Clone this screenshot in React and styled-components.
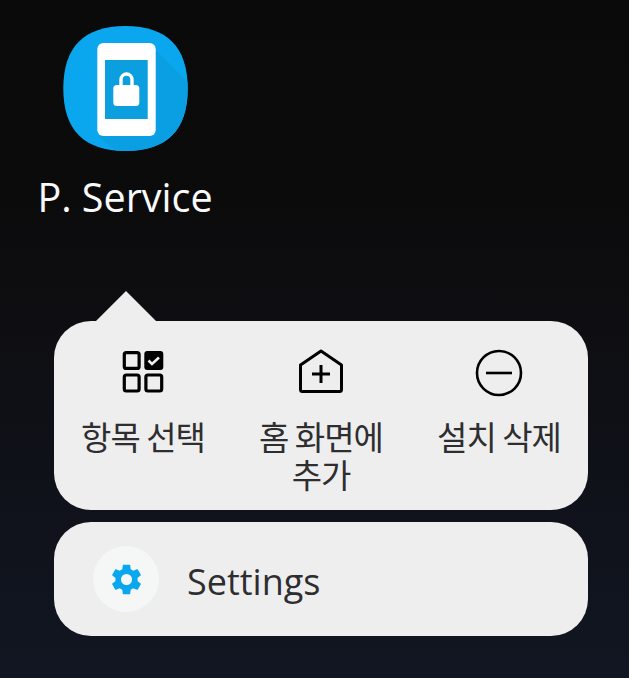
import React from "react";
import styled, { createGlobalStyle } from "styled-components";

const Global = createGlobalStyle`
  html, body {
    margin: 0;
    padding: 0;
    background: #0c0c10;
  }
`;

const Screen = styled.div`
  width: 629px;
  height: 678px;
  overflow: hidden;
  box-sizing: border-box;
  padding: 26px 41px 0 54px;
  background: linear-gradient(180deg, #0b0a0a 0%, #0c0b0c 30%, #0f1016 60%, #111622 100%);
  font-family: "Noto Sans", "Noto Sans CJK KR", sans-serif;
`;

const AppTile = styled.div`
  width: 142px;
  display: flex;
  flex-direction: column;
  align-items: center;
`;

const Label = styled.div`
  margin-top: 18px;
  color: #fafafa;
  font-size: 39.5px;
  line-height: 54px;
  white-space: nowrap;
  font-family: "Open Sans", sans-serif;
`;

const Popup = styled.div`
  position: relative;
  margin-top: 97px;
  height: 189px;
  background: #eeeeef;
  border-radius: 37px;
  display: grid;
  grid-template-columns: repeat(3, 1fr);
`;

const Arrow = styled.div`
  position: absolute;
  left: 42px;
  top: -30px;
  width: 60px;
  height: 30px;
  background: #eeeeef;
  clip-path: polygon(50% 0, 100% 100%, 0 100%);
`;

const Action = styled.div`
  display: flex;
  flex-direction: column;
  align-items: center;
  padding-top: 29px;
`;

const ActionIcon = styled.svg`
  width: 46px;
  height: 46px;
  display: block;
  overflow: visible;
`;

const ActionText = styled.div`
  margin-top: 21px;
  width: 150px;
  text-align: center;
  color: #2e2e30;
  font-family: "Noto Sans CJK KR", sans-serif;
  font-size: 33px;
  line-height: 38px;
  letter-spacing: -1px;
  word-break: keep-all;
`;

const SettingsCard = styled.div`
  margin-top: 12px;
  height: 114px;
  background: #eeeeef;
  border-radius: 37px;
  display: flex;
  align-items: center;
  padding-left: 39px;
  gap: 28px;
`;

const GearCircle = styled.div`
  width: 66px;
  height: 66px;
  border-radius: 50%;
  background: #f5f6f6;
  display: flex;
  align-items: center;
  justify-content: center;
`;

const SettingsText = styled.div`
  padding-top: 4px;
  color: #2e2e30;
  font-family: "Open Sans", sans-serif;
  font-size: 36px;
`;

function AppIcon() {
  return (
    <svg width="126" height="126" viewBox="0 0 126 126">
      <defs>
        <clipPath id="squircle">
          <path d="M63.500 0C105 0 125.700 21 125.700 62.500C125.700 104 105 125 63.500 125C22 125 1.300 104 1.300 62.500C1.300 21 22 0 63.500 0Z" />
        </clipPath>
      </defs>
      <g clipPath="url(#squircle)">
        <rect width="126" height="126" fill="#0ba7ee" />
        <path d="M93.700 24L130 60V130H60L36 110H93.700Z" fill="#0a9fe2" />
        <rect x="35.300" y="17" width="58.400" height="93" rx="6" fill="#fff" />
        <rect x="43" y="34" width="42.700" height="59" fill="#0b9fe0" />
        <path d="M59 62V53.500a5.500 5.500 0 0 1 11 0V62" fill="none" stroke="#fff" strokeWidth="3.400" />
        <rect x="51.300" y="59" width="26" height="21" rx="3.500" fill="#fff" />
      </g>
    </svg>
  );
}

function GridIcon() {
  return (
    <ActionIcon viewBox="0 0 46 46">
      <g fill="none" stroke="#000" strokeWidth="3.200">
        <rect x="4.300" y="2.600" width="14.800" height="15.800" rx="2" />
        <rect x="4.300" y="25" width="14.800" height="16" rx="2" />
        <rect x="25.900" y="25" width="15.800" height="16" rx="2" />
      </g>
      <rect x="24.300" y="1" width="19" height="19" rx="3" fill="#000" />
      <path d="M28.500 10.500l3.500 3.500L39 7.500" fill="none" stroke="#eeeeef" strokeWidth="2.600" />
    </ActionIcon>
  );
}

function HomeAddIcon() {
  return (
    <ActionIcon viewBox="0 0 46 46">
      <path
        d="M23 1L43.500 15V39.500a2 2 0 0 1-2 2H4.500a2 2 0 0 1-2-2V15Z"
        fill="none"
        stroke="#000"
        strokeWidth="3"
        strokeLinejoin="round"
      />
      <path d="M23 15V33M14 24H32" stroke="#000" strokeWidth="3" />
    </ActionIcon>
  );
}

function MinusCircleIcon() {
  return (
    <ActionIcon viewBox="0 0 46 46">
      <circle cx="23" cy="23" r="22" fill="none" stroke="#000" strokeWidth="2.600" />
      <path d="M10 23H36" stroke="#000" strokeWidth="2.600" />
    </ActionIcon>
  );
}

function GearIcon() {
  return (
    <svg width="37" height="37" viewBox="0 0 24 24">
      <path
        fill="#0ba7ee"
        d="M19.140 12.940c.04-.3.06-.61.06-.94 0-.32-.02-.64-.07-.94l2.030-1.580a.49.49 0 0 0 .12-.61l-1.920-3.320a.49.49 0 0 0-.59-.22l-2.390.96c-.5-.38-1.030-.7-1.620-.94l-.36-2.540a.48.48 0 0 0-.48-.41h-3.840a.48.48 0 0 0-.47.41l-.36 2.540c-.59.24-1.130.57-1.620.94l-2.390-.96a.49.49 0 0 0-.59.22L2.740 8.870a.48.48 0 0 0 .12.61l2.030 1.580c-.05.3-.09.63-.09.94s.02.64.07.94l-2.030 1.580a.49.49 0 0 0-.12.61l1.920 3.320c.12.22.37.29.59.22l2.390-.96c.5.38 1.030.7 1.620.94l.36 2.540c.05.24.24.41.48.41h3.840c.24 0 .44-.17.47-.41l.36-2.540c.59-.24 1.130-.56 1.620-.94l2.390.96c.22.08.47 0 .59-.22l1.920-3.320c.12-.22.07-.47-.12-.61l-2.010-1.580zM12 15.600A3.600 3.600 0 1 1 12 8.400a3.600 3.600 0 0 1 0 7.200z"
      />
    </svg>
  );
}

export default function App() {
  return (
    <Screen>
      <Global />
      <AppTile>
        <AppIcon />
        <Label>P. Service</Label>
      </AppTile>
      <Popup>
        <Arrow />
        <Action>
          <GridIcon />
          <ActionText>항목 선택</ActionText>
        </Action>
        <Action>
          <HomeAddIcon />
          <ActionText>홈 화면에 추가</ActionText>
        </Action>
        <Action>
          <MinusCircleIcon />
          <ActionText>설치 삭제</ActionText>
        </Action>
      </Popup>
      <SettingsCard>
        <GearCircle>
          <GearIcon />
        </GearCircle>
        <SettingsText>Settings</SettingsText>
      </SettingsCard>
    </Screen>
  );
}
